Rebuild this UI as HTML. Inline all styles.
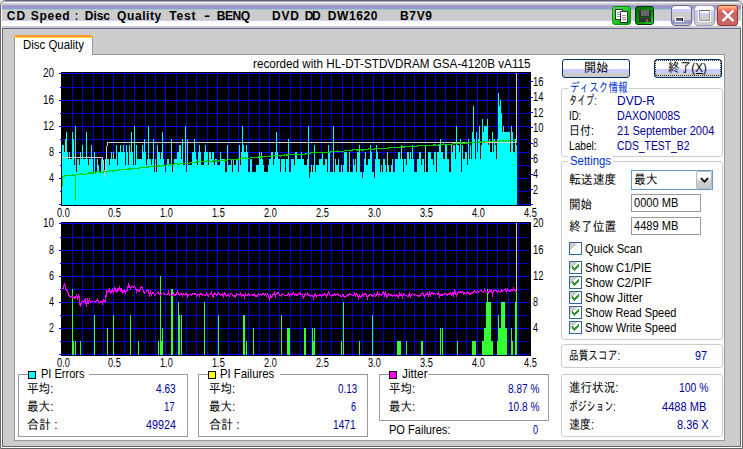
<!DOCTYPE html><html lang="ja"><head><meta charset="utf-8"><title>CD Speed : Disc Quality Test</title><style>

html,body{margin:0;padding:0}
body{width:743px;height:449px;position:relative;overflow:hidden;background:#e6e6e6;font:12px/14px "Liberation Sans","IPAGothic",sans-serif;color:#000}
div,span,svg{position:absolute;box-sizing:border-box}
.t{white-space:pre;height:14px;line-height:14px;transform-origin:0 50%;display:block}
.b{font-weight:bold}
.frame{left:0;top:0;width:743px;height:449px;border:1px solid #666;border-radius:6px 6px 0 0;background:#fff;overflow:hidden}
.frame3{left:2px;top:28px;width:739px;height:419px;border:1px solid #666;border-top-color:#666699;background:#ccc}
.titlebar{left:1px;top:0;width:739px;height:28px;border-radius:4px 4px 0 0;overflow:hidden}
.band{left:0;width:739px}
.page{left:14px;top:54px;width:711px;height:387px;border:1px solid #999;background:#fff}
.tab{left:14px;top:37px;width:79px;height:18px;background:#fff;border:1px solid #999;border-bottom:0;border-top:0}
.gb{border:1px solid #ccc;border-radius:3px}
.gbl{background:#fff}
.gs{border:1px solid #999}
.btn{border:1px solid #003366;border-radius:3px;background:linear-gradient(#fff 0,#fff 53%,#ccccff 53%,#ccccff 76.5%,#ccc 76.5%,#ccc 100%)}
.edit{border:1px solid #999;background:#fff}
.cb{width:13px;height:13px;border:1px solid #336699;background:linear-gradient(135deg,#ccc 0,#ccc 34%,#ffffcc 36%,#fff 40%)}
.lg{width:8px;height:8px;border:1px solid #000}

</style></head><body>
<div class="frame"><div class="titlebar">
<div class="band" style="top:0px;height:1px;background:#9999cc"></div>
<div class="band" style="top:1px;height:1px;background:#fff"></div>
<div class="band" style="top:2px;height:2px;background:#ccc"></div>
<div class="band" style="top:4px;height:4px;background:#9999cc"></div>
<div class="band" style="top:8px;height:1px;background:#99cccc"></div>
<div class="band" style="top:9px;height:10px;background:#ccc"></div>
<div class="band" style="top:19px;height:1px;background:#ccccff"></div>
<div class="band" style="top:20px;height:5px;background:#fff"></div>
<div class="band" style="top:25px;height:2px;background:#ccc"></div>
</div></div><div class="frame3"></div>

<div style="left:612px;top:6px;width:19px;height:19px;border-radius:3px;border:1px solid #009900;background:linear-gradient(135deg,#66cc66 0,#33cc33 40%,#009900 100%)">
<svg style="left:2px;top:2px" width="14" height="14" viewBox="0 0 14 14" shape-rendering="crispEdges"><rect x="0.5" y="0.5" width="7" height="10" fill="#fff" stroke="#333"/><rect x="5.5" y="2.5" width="7" height="11" fill="#fff" stroke="#333"/><path d="M2 3h4M2 5h3M2 7h3M7 6h4M7 8h4M7 10h4" stroke="#999" fill="none"/><rect x="10" y="10" width="1" height="1" fill="#cc0066"/></svg></div>
<div style="left:635px;top:6px;width:19px;height:19px;border-radius:3px;border:1px solid #003300;background:linear-gradient(135deg,#006600 0,#009900 60%,#33cc33 100%)">
<svg style="left:2px;top:2px" width="14" height="14" viewBox="0 0 14 14" shape-rendering="crispEdges"><rect x="1" y="1" width="12" height="12" fill="#333"/><rect x="3" y="1" width="8" height="6" fill="#666"/><rect x="3" y="9" width="7" height="4" fill="#333" stroke="#666" stroke-width="0"/><rect x="2" y="8" width="10" height="1" fill="#006600"/><rect x="8" y="10" width="2" height="3" fill="#666"/></svg></div>
<div style="left:671px;top:5px;width:21px;height:21px;border-radius:4px;border:1px solid #666699;background:linear-gradient(#fff 0,#fff 15.8%,#ccccff 15.8%,#ccccff 31.6%,#ccc 31.6%,#ccc 73.7%,#9999cc 73.7%,#9999cc 94.7%,#ccc 94.7%,#ccc 100%)"><div style="left:3px;top:11px;width:9px;height:5px;background:#fff"></div><div style="left:4px;top:12px;width:7px;height:3px;background:#666699;border-right:1px solid #000;border-top:1px solid #333"></div></div>
<div style="left:694px;top:5px;width:21px;height:21px;border-radius:4px;border:1px solid #9999cc;background:linear-gradient(#fff 0,#fff 21%,#ccccff 21%,#ccccff 52%,#ccc 52%,#ccc 100%)"><div style="left:3px;top:3px;width:13px;height:13px;border:1px solid #fff"></div><div style="left:4px;top:4px;width:11px;height:11px;border:1px solid #999;border-top-color:#666;background:linear-gradient(#fff 0,#fff 25%,#ccccff 25%,#ccccff 50%,#ccc 50%,#ccc 100%)"></div></div>
<div style="left:717px;top:5px;width:21px;height:21px;border-radius:3px;border:1px solid #993333;background:linear-gradient(#ffcc99 0,#ff9966 12%,#ff6666 24%,#cc6666 34%,#cc6666 100%)"><svg style="left:2px;top:2px" width="15" height="15" viewBox="0 0 15 15"><path d="M2.6 2.4L13.4 13.2M13.4 2.4L2.6 13.2" stroke="#663333" stroke-width="3.4" fill="none" opacity=".35"/><path d="M2.6 2.4L13.4 13.2M13.4 2.4L2.6 13.2" stroke="#fff" stroke-width="2.5" fill="none"/></svg></div>

<div class="page"></div><div class="tab"></div><div style="left:14px;top:35px;width:79px;height:3px;border-radius:3px 3px 0 0;background:linear-gradient(#ff9933 0,#ff9933 66%,#ffcc33 67%,#ffcc33 100%)"></div>
<svg style="left:0;top:66px" width="560" height="300" viewBox="0 66 560 300" shape-rendering="crispEdges">
<rect x="61" y="72" width="470" height="134" fill="#000"/>
<rect x="72" y="73" width="1" height="133" fill="#0000cc"/><rect x="82" y="73" width="1" height="133" fill="#0000cc"/><rect x="93" y="73" width="1" height="133" fill="#0000cc"/><rect x="103" y="73" width="1" height="133" fill="#0000cc"/><rect x="113" y="73" width="1" height="133" fill="#0000ff"/><rect x="124" y="73" width="1" height="133" fill="#0000cc"/><rect x="134" y="73" width="1" height="133" fill="#0000cc"/><rect x="145" y="73" width="1" height="133" fill="#0000cc"/><rect x="155" y="73" width="1" height="133" fill="#0000cc"/><rect x="165" y="73" width="1" height="133" fill="#0000ff"/><rect x="176" y="73" width="1" height="133" fill="#0000cc"/><rect x="186" y="73" width="1" height="133" fill="#0000cc"/><rect x="196" y="73" width="1" height="133" fill="#0000cc"/><rect x="207" y="73" width="1" height="133" fill="#0000cc"/><rect x="217" y="73" width="1" height="133" fill="#0000ff"/><rect x="228" y="73" width="1" height="133" fill="#0000cc"/><rect x="238" y="73" width="1" height="133" fill="#0000cc"/><rect x="248" y="73" width="1" height="133" fill="#0000cc"/><rect x="259" y="73" width="1" height="133" fill="#0000cc"/><rect x="269" y="73" width="1" height="133" fill="#0000ff"/><rect x="279" y="73" width="1" height="133" fill="#0000cc"/><rect x="290" y="73" width="1" height="133" fill="#0000cc"/><rect x="300" y="73" width="1" height="133" fill="#0000cc"/><rect x="311" y="73" width="1" height="133" fill="#0000cc"/><rect x="321" y="73" width="1" height="133" fill="#0000ff"/><rect x="331" y="73" width="1" height="133" fill="#0000cc"/><rect x="342" y="73" width="1" height="133" fill="#0000cc"/><rect x="352" y="73" width="1" height="133" fill="#0000cc"/><rect x="362" y="73" width="1" height="133" fill="#0000cc"/><rect x="373" y="73" width="1" height="133" fill="#0000ff"/><rect x="383" y="73" width="1" height="133" fill="#0000cc"/><rect x="394" y="73" width="1" height="133" fill="#0000cc"/><rect x="404" y="73" width="1" height="133" fill="#0000cc"/><rect x="414" y="73" width="1" height="133" fill="#0000cc"/><rect x="425" y="73" width="1" height="133" fill="#0000ff"/><rect x="435" y="73" width="1" height="133" fill="#0000cc"/><rect x="445" y="73" width="1" height="133" fill="#0000cc"/><rect x="456" y="73" width="1" height="133" fill="#0000cc"/><rect x="466" y="73" width="1" height="133" fill="#0000cc"/><rect x="477" y="73" width="1" height="133" fill="#0000ff"/><rect x="487" y="73" width="1" height="133" fill="#0000cc"/><rect x="497" y="73" width="1" height="133" fill="#0000cc"/><rect x="508" y="73" width="1" height="133" fill="#0000cc"/><rect x="518" y="73" width="1" height="133" fill="#0000cc"/><rect x="59" y="73" width="470" height="1" fill="#0000ff"/><rect x="60" y="87" width="469" height="1" fill="#0000cc"/><rect x="59" y="100" width="470" height="1" fill="#0000ff"/><rect x="60" y="113" width="469" height="1" fill="#0000cc"/><rect x="59" y="126" width="470" height="1" fill="#0000ff"/><rect x="60" y="139" width="469" height="1" fill="#0000cc"/><rect x="59" y="152" width="470" height="1" fill="#0000ff"/><rect x="60" y="165" width="469" height="1" fill="#0000cc"/><rect x="59" y="178" width="470" height="1" fill="#0000ff"/><rect x="60" y="191" width="469" height="1" fill="#0000cc"/><rect x="59" y="204" width="470" height="1" fill="#0000ff"/>
<path d="M62 205V145H64V152H65V139H66V132H67V152H68V159H69V152H70V159H72V132H73V139H74V165H75V126H76V172H77V159H79V165H80V152H81V159H82V145H83V159H86V132H87V159H88V165H89V159H91V145H92V159H93V172H94V152H95V172H97V159H98V165H99V172H101V159H103V165H104V172H106V159H109V165H110V159H111V152H112V159H113V152H114V159H116V145H117V165H118V152H120V145H121V152H123V145H124V152H125V165H126V145H127V152H128V165H129V145H130V152H131V132H132V152H133V165H134V126H135V165H136V145H137V159H142V145H143V152H144V139H145V152H146V165H147V159H148V126H149V159H151V165H152V159H153V139H154V172H155V159H156V172H157V145H158V152H160V159H161V152H162V132H163V159H164V165H165V172H166V165H167V159H169V165H171V139H172V172H173V165H174V159H177V152H179V145H181V159H182V139H183V165H185V126H186V172H187V139H188V165H192V152H194V139H195V152H196V159H197V165H198V152H199V145H200V152H201V165H204V152H205V145H206V152H208V165H209V152H211V159H212V152H214V165H215V159H217V165H220V152H221V159H225V172H227V145H228V165H231V159H232V172H233V159H234V165H236V159H238V172H239V145H240V165H241V152H242V126H243V145H244V152H246V145H247V152H248V172H250V159H252V172H256V165H259V152H260V159H261V152H262V159H263V165H264V172H268V165H269V159H271V152H273V165H274V159H275V152H276V132H277V152H278V159H280V172H281V159H285V172H286V159H288V139H289V172H291V159H294V165H295V152H297V159H301V152H302V159H304V165H307V159H308V126H309V178H310V172H311V165H312V172H313V165H314V145H315V172H316V165H319V159H322V152H323V165H325V159H327V172H328V145H329V152H330V172H333V126H334V172H335V159H336V165H338V159H339V172H341V165H342V172H343V165H344V152H347V172H349V152H350V172H353V159H354V165H355V159H356V172H357V152H359V145H360V172H362V178H363V172H364V159H365V152H366V165H368V159H370V145H371V152H372V172H374V178H375V159H376V145H377V152H378V159H380V172H381V165H382V172H383V159H385V165H386V172H387V152H388V165H389V172H391V165H392V159H393V172H395V159H398V152H400V159H401V145H402V159H403V172H404V159H406V165H407V152H409V159H410V152H411V159H412V145H413V159H414V172H417V159H419V152H421V165H422V159H424V172H425V145H426V172H428V152H431V159H433V165H434V152H436V172H437V152H439V145H440V139H441V152H443V159H445V145H447V159H449V172H451V145H452V152H453V145H455V159H456V126H457V145H459V152H460V139H461V172H462V145H463V159H465V152H467V165H468V139H469V159H470V145H471V159H472V132H473V106H474V139H475V159H476V132H477V152H478V139H479V126H480V159H481V145H482V119H483V132H484V126H487V119H488V145H489V139H490V152H492V132H493V152H494V139H495V145H496V159H497V139H498V93H499V106H500V100H501V113H502V132H503V126H504V132H510V152H511V126H512V132H513V152H515V139H516V145H517V205Z" fill="#00ffff"/>
<rect x="529" y="197" width="2" height="1" fill="#0000ff"/>
<rect x="529" y="189" width="4" height="1" fill="#0000ff"/>
<rect x="529" y="181" width="2" height="1" fill="#0000ff"/>
<rect x="529" y="174" width="4" height="1" fill="#0000ff"/>
<rect x="529" y="166" width="2" height="1" fill="#0000ff"/>
<rect x="529" y="158" width="4" height="1" fill="#0000ff"/>
<rect x="529" y="150" width="2" height="1" fill="#0000ff"/>
<rect x="529" y="143" width="4" height="1" fill="#0000ff"/>
<rect x="529" y="135" width="2" height="1" fill="#0000ff"/>
<rect x="529" y="127" width="4" height="1" fill="#0000ff"/>
<rect x="529" y="120" width="2" height="1" fill="#0000ff"/>
<rect x="529" y="112" width="4" height="1" fill="#0000ff"/>
<rect x="529" y="104" width="2" height="1" fill="#0000ff"/>
<rect x="529" y="97" width="4" height="1" fill="#0000ff"/>
<rect x="529" y="89" width="2" height="1" fill="#0000ff"/>
<rect x="529" y="81" width="4" height="1" fill="#0000ff"/>
<rect x="517" y="204" width="16" height="1" fill="#0000ff"/>
<rect x="516" y="73" width="1" height="70" fill="#ccc"/>
<polyline points="62,157.5 102.5,157.5 103.5,162 104.5,176.5 105.5,168 106.5,150 107.5,142.5 516,142.5" fill="none" stroke="#ccc" stroke-width="1"/>
<polyline points="62.5,186 62.5,177 63,176.6 65,175.9 67,175.6 69,175.9 71,175.6 73,174.8 75,175.6 77,174.3 79,174.6 81,173.8 83,174.1 85,174.4 87,173.6 89,172.9 91,173.1 93,172.9 95,173.2 97,171.9 99,171.7 101,172.5 103,172.2 105,171.5 107,171.3 109,171.1 111,170.3 113,171.1 115,170.4 117,170.2 119,170.0 121,169.3 123,169.5 125,169.3 127,169.1 129,168.9 131,169.2 133,168.0 135,168.8 137,168.6 139,168.4 141,167.2 143,168.0 145,167.3 147,167.1 149,166.9 151,166.7 153,166.5 155,166.8 157,166.1 159,165.9 161,166.2 163,165.5 165,165.8 167,164.6 169,165.5 171,164.3 173,164.6 175,163.9 177,163.7 179,164.5 181,163.3 183,163.7 185,163.5 187,163.3 189,163.1 191,162.4 193,162.8 195,162.6 197,161.9 199,161.7 201,161.6 203,161.9 205,161.7 207,161.0 209,161.4 211,161.2 213,161.0 215,160.8 217,161.2 219,161.0 221,160.3 223,160.2 225,160.0 227,160.3 229,159.7 231,159.5 233,159.3 235,159.7 237,159.5 239,158.8 241,158.7 243,158.0 245,157.9 247,158.2 249,158.5 251,157.4 253,157.7 255,157.1 257,157.4 259,156.7 261,157.1 263,156.9 265,156.8 267,156.6 269,156.5 271,156.3 273,155.7 275,155.5 277,155.8 279,155.7 281,156.0 283,155.4 285,154.7 287,155.1 289,154.9 291,154.8 293,154.6 295,154.5 297,154.3 299,154.2 301,154.5 303,154.4 305,154.3 307,153.1 309,154.0 311,152.8 313,152.7 315,153.0 317,152.4 319,152.2 321,152.6 323,153.0 325,152.3 327,152.2 329,152.5 331,151.9 333,151.2 335,151.6 337,151.0 339,151.3 341,151.2 343,151.5 345,150.4 347,150.8 349,150.6 351,151.0 353,149.9 355,149.7 357,150.1 359,149.9 361,149.8 363,150.2 365,149.5 367,149.4 369,148.8 371,149.1 373,149.5 375,148.9 377,148.2 379,148.6 381,148.5 383,148.3 385,148.2 387,148.6 389,147.9 391,147.3 393,147.2 395,147.5 397,147.4 399,147.3 401,147.2 403,147.0 405,146.9 407,146.3 409,146.6 411,146.5 413,146.9 415,146.3 417,146.1 419,145.5 421,145.9 423,145.7 425,145.1 427,145.5 429,145.4 431,145.2 433,145.1 435,145.0 437,145.4 439,144.7 441,144.6 443,144.0 445,144.4 447,144.2 449,144.1 451,144.5 453,143.9 455,143.8 457,143.6 459,143.5 461,142.9 463,143.8 465,143.1 467,143.0 469,142.9 471,142.8 473,142.2 475,142.5 477,142.4 479,141.8 481,142.2 483,142.1 485,141.9 487,141.8 489,141.2 491,141.6 493,141.0 495,141.4 497,141.7 499,141.1 501,140.5 503,140.9 505,141.3 507,140.6 509,141.0 511,140.4 513,140.8 515,139.7" fill="none" stroke="#00cc00" stroke-width="1.2"/>
<rect x="75" y="176" width="1" height="25" fill="#00cc00"/>
<rect x="61" y="222" width="470" height="134" fill="#000"/>
<rect x="72" y="223" width="1" height="133" fill="#0000cc"/><rect x="82" y="223" width="1" height="133" fill="#0000cc"/><rect x="93" y="223" width="1" height="133" fill="#0000cc"/><rect x="103" y="223" width="1" height="133" fill="#0000cc"/><rect x="113" y="223" width="1" height="133" fill="#0000ff"/><rect x="124" y="223" width="1" height="133" fill="#0000cc"/><rect x="134" y="223" width="1" height="133" fill="#0000cc"/><rect x="145" y="223" width="1" height="133" fill="#0000cc"/><rect x="155" y="223" width="1" height="133" fill="#0000cc"/><rect x="165" y="223" width="1" height="133" fill="#0000ff"/><rect x="176" y="223" width="1" height="133" fill="#0000cc"/><rect x="186" y="223" width="1" height="133" fill="#0000cc"/><rect x="196" y="223" width="1" height="133" fill="#0000cc"/><rect x="207" y="223" width="1" height="133" fill="#0000cc"/><rect x="217" y="223" width="1" height="133" fill="#0000ff"/><rect x="228" y="223" width="1" height="133" fill="#0000cc"/><rect x="238" y="223" width="1" height="133" fill="#0000cc"/><rect x="248" y="223" width="1" height="133" fill="#0000cc"/><rect x="259" y="223" width="1" height="133" fill="#0000cc"/><rect x="269" y="223" width="1" height="133" fill="#0000ff"/><rect x="279" y="223" width="1" height="133" fill="#0000cc"/><rect x="290" y="223" width="1" height="133" fill="#0000cc"/><rect x="300" y="223" width="1" height="133" fill="#0000cc"/><rect x="311" y="223" width="1" height="133" fill="#0000cc"/><rect x="321" y="223" width="1" height="133" fill="#0000ff"/><rect x="331" y="223" width="1" height="133" fill="#0000cc"/><rect x="342" y="223" width="1" height="133" fill="#0000cc"/><rect x="352" y="223" width="1" height="133" fill="#0000cc"/><rect x="362" y="223" width="1" height="133" fill="#0000cc"/><rect x="373" y="223" width="1" height="133" fill="#0000ff"/><rect x="383" y="223" width="1" height="133" fill="#0000cc"/><rect x="394" y="223" width="1" height="133" fill="#0000cc"/><rect x="404" y="223" width="1" height="133" fill="#0000cc"/><rect x="414" y="223" width="1" height="133" fill="#0000cc"/><rect x="425" y="223" width="1" height="133" fill="#0000ff"/><rect x="435" y="223" width="1" height="133" fill="#0000cc"/><rect x="445" y="223" width="1" height="133" fill="#0000cc"/><rect x="456" y="223" width="1" height="133" fill="#0000cc"/><rect x="466" y="223" width="1" height="133" fill="#0000cc"/><rect x="477" y="223" width="1" height="133" fill="#0000ff"/><rect x="487" y="223" width="1" height="133" fill="#0000cc"/><rect x="497" y="223" width="1" height="133" fill="#0000cc"/><rect x="508" y="223" width="1" height="133" fill="#0000cc"/><rect x="518" y="223" width="1" height="133" fill="#0000cc"/><rect x="59" y="223" width="470" height="1" fill="#0000ff"/><rect x="60" y="237" width="469" height="1" fill="#0000cc"/><rect x="59" y="250" width="470" height="1" fill="#0000ff"/><rect x="60" y="263" width="469" height="1" fill="#0000cc"/><rect x="59" y="276" width="470" height="1" fill="#0000ff"/><rect x="60" y="289" width="469" height="1" fill="#0000cc"/><rect x="59" y="302" width="470" height="1" fill="#0000ff"/><rect x="60" y="315" width="469" height="1" fill="#0000cc"/><rect x="59" y="328" width="470" height="1" fill="#0000ff"/><rect x="60" y="341" width="469" height="1" fill="#0000cc"/><rect x="59" y="354" width="470" height="1" fill="#0000ff"/>
<g fill="#33ff33"><rect x="72" y="289" width="1" height="66"/><rect x="73" y="341" width="1" height="14"/><rect x="75" y="341" width="1" height="14"/><rect x="80" y="341" width="1" height="14"/><rect x="94" y="315" width="1" height="40"/><rect x="107" y="328" width="1" height="27"/><rect x="113" y="315" width="1" height="40"/><rect x="130" y="315" width="1" height="40"/><rect x="138" y="341" width="1" height="14"/><rect x="158" y="341" width="1" height="14"/><rect x="160" y="276" width="1" height="79"/><rect x="161" y="341" width="2" height="14"/><rect x="162" y="328" width="1" height="27"/><rect x="171" y="289" width="2" height="66"/><rect x="178" y="302" width="1" height="53"/><rect x="179" y="315" width="1" height="40"/><rect x="181" y="315" width="1" height="40"/><rect x="204" y="302" width="1" height="53"/><rect x="218" y="315" width="1" height="40"/><rect x="243" y="315" width="2" height="40"/><rect x="246" y="341" width="1" height="14"/><rect x="253" y="328" width="1" height="27"/><rect x="281" y="315" width="1" height="40"/><rect x="287" y="328" width="3" height="27"/><rect x="304" y="328" width="2" height="27"/><rect x="312" y="328" width="1" height="27"/><rect x="313" y="341" width="1" height="14"/><rect x="314" y="328" width="1" height="27"/><rect x="341" y="341" width="1" height="14"/><rect x="343" y="302" width="1" height="53"/><rect x="359" y="341" width="1" height="14"/><rect x="372" y="315" width="1" height="40"/><rect x="397" y="341" width="4" height="14"/><rect x="406" y="341" width="1" height="14"/><rect x="421" y="341" width="2" height="14"/><rect x="440" y="328" width="1" height="27"/><rect x="442" y="328" width="1" height="27"/><rect x="457" y="341" width="1" height="14"/><rect x="472" y="341" width="4" height="14"/><rect x="482" y="341" width="3" height="14"/><rect x="484" y="328" width="2" height="27"/><rect x="486" y="302" width="5" height="53"/><rect x="487" y="289" width="1" height="66"/><rect x="491" y="341" width="2" height="14"/><rect x="497" y="341" width="3" height="14"/><rect x="498" y="315" width="1" height="40"/><rect x="499" y="328" width="2" height="27"/><rect x="501" y="302" width="4" height="53"/><rect x="505" y="328" width="2" height="27"/><rect x="511" y="328" width="1" height="27"/><rect x="512" y="341" width="1" height="14"/><rect x="515" y="302" width="2" height="53"/><rect x="516" y="289" width="1" height="66"/></g>
<rect x="516" y="223" width="1" height="68" fill="#ccc"/>
<polyline points="62.5,288.0 63.5,288.1 64.5,282.9 65.5,288.4 66.5,290.0 67.5,290.2 68.5,295.0 69.5,295.9 70.5,297.1 71.5,296.5 72.5,297.2 73.5,297.5 74.5,297.9 75.5,298.1 76.5,294.1 77.5,298.1 78.5,294.6 79.5,299.5 80.5,307.3 81.5,301.5 82.5,300.8 83.5,301.9 84.5,300.7 85.5,298.9 86.5,306.5 87.5,299.7 88.5,302.0 89.5,299.5 90.5,302.5 91.5,301.5 92.5,301.7 93.5,301.3 94.5,301.4 95.5,302.1 96.5,300.8 97.5,299.5 98.5,301.5 99.5,302.9 100.5,301.8 101.5,301.6 102.5,303.4 103.5,300.0 104.5,300.9 105.5,301.6 106.5,290.9 107.5,291.9 108.5,291.2 109.5,289.6 110.5,292.8 111.5,292.1 112.5,289.8 113.5,292.3 114.5,288.1 115.5,289.5 116.5,293.3 117.5,289.0 118.5,290.1 119.5,286.4 120.5,291.6 121.5,288.4 122.5,293.8 123.5,290.7 124.5,289.5 125.5,292.6 126.5,290.7 127.5,290.5 128.5,284.1 129.5,285.9 130.5,288.9 131.5,286.5 132.5,286.5 133.5,287.2 134.5,286.2 135.5,287.8 136.5,291.7 137.5,290.2 138.5,291.2 139.5,291.1 140.5,288.4 141.5,287.1 142.5,288.5 143.5,291.5 144.5,293.2 145.5,292.4 146.5,291.7 147.5,289.8 148.5,291.2 149.5,295.1 150.5,291.7 151.5,294.5 152.5,292.8 153.5,292.8 154.5,295.1 155.5,294.5 156.5,293.6 157.5,292.6 158.5,291.7 159.5,294.6 160.5,295.4 161.5,294.2 162.5,293.5 163.5,292.7 164.5,294.0 165.5,294.2 166.5,294.3 167.5,294.8 168.5,291.9 169.5,295.0 170.5,294.6 171.5,295.4 172.5,295.1 173.5,293.5 174.5,295.2 175.5,295.4 176.5,293.7 177.5,291.7 178.5,293.6 179.5,294.8 180.5,293.6 181.5,293.6 182.5,295.8 183.5,294.2 184.5,294.8 185.5,294.3 186.5,293.1 187.5,296.4 188.5,294.3 189.5,294.6 190.5,294.8 191.5,294.9 192.5,293.4 193.5,293.4 194.5,294.3 195.5,293.9 196.5,295.9 197.5,294.7 198.5,294.5 199.5,295.7 200.5,293.2 201.5,293.4 202.5,295.0 203.5,294.4 204.5,295.5 205.5,295.6 206.5,293.6 207.5,295.7 208.5,295.9 209.5,294.2 210.5,294.3 211.5,292.6 212.5,295.3 213.5,297.1 214.5,292.7 215.5,294.2 216.5,295.4 217.5,293.9 218.5,292.9 219.5,293.5 220.5,294.9 221.5,294.4 222.5,293.7 223.5,296.5 224.5,292.9 225.5,294.6 226.5,296.0 227.5,294.3 228.5,295.0 229.5,296.2 230.5,293.9 231.5,293.7 232.5,294.4 233.5,295.9 234.5,295.4 235.5,297.0 236.5,294.1 237.5,294.5 238.5,294.6 239.5,294.7 240.5,293.2 241.5,296.1 242.5,294.7 243.5,294.5 244.5,297.4 245.5,294.2 246.5,295.7 247.5,295.8 248.5,293.9 249.5,295.1 250.5,295.5 251.5,294.4 252.5,295.2 253.5,295.7 254.5,294.0 255.5,296.2 256.5,295.9 257.5,295.9 258.5,293.7 259.5,294.7 260.5,294.3 261.5,294.9 262.5,294.1 263.5,293.9 264.5,295.5 265.5,294.3 266.5,295.8 267.5,294.4 268.5,295.8 269.5,299.1 270.5,295.2 271.5,296.9 272.5,295.6 273.5,294.0 274.5,292.2 275.5,296.1 276.5,294.0 277.5,292.8 278.5,293.1 279.5,295.0 280.5,295.2 281.5,295.9 282.5,293.8 283.5,294.7 284.5,295.4 285.5,295.8 286.5,295.6 287.5,294.9 288.5,293.2 289.5,295.6 290.5,293.9 291.5,294.9 292.5,294.5 293.5,293.0 294.5,295.1 295.5,294.0 296.5,295.0 297.5,295.2 298.5,294.5 299.5,293.0 300.5,294.1 301.5,294.4 302.5,295.1 303.5,297.7 304.5,295.7 305.5,294.1 306.5,294.5 307.5,293.3 308.5,295.1 309.5,294.8 310.5,296.3 311.5,295.3 312.5,295.5 313.5,297.9 314.5,294.4 315.5,293.9 316.5,296.8 317.5,295.2 318.5,295.4 319.5,295.1 320.5,295.1 321.5,296.3 322.5,294.8 323.5,295.5 324.5,293.9 325.5,294.7 326.5,296.8 327.5,295.1 328.5,292.0 329.5,294.0 330.5,295.8 331.5,296.2 332.5,294.8 333.5,294.9 334.5,293.6 335.5,294.9 336.5,294.3 337.5,293.9 338.5,295.1 339.5,295.5 340.5,296.2 341.5,296.7 342.5,295.1 343.5,294.8 344.5,297.4 345.5,296.2 346.5,296.0 347.5,295.0 348.5,294.9 349.5,293.8 350.5,294.7 351.5,294.8 352.5,295.2 353.5,295.5 354.5,293.5 355.5,295.7 356.5,294.1 357.5,294.5 358.5,297.9 359.5,295.1 360.5,296.9 361.5,296.7 362.5,294.5 363.5,295.8 364.5,293.7 365.5,294.2 366.5,295.1 367.5,298.3 368.5,295.5 369.5,295.2 370.5,294.7 371.5,294.7 372.5,296.6 373.5,296.0 374.5,294.2 375.5,296.0 376.5,295.0 377.5,292.9 378.5,295.7 379.5,293.6 380.5,294.3 381.5,295.5 382.5,293.1 383.5,292.2 384.5,295.0 385.5,292.5 386.5,297.0 387.5,296.4 388.5,293.8 389.5,294.5 390.5,295.1 391.5,294.6 392.5,295.9 393.5,295.5 394.5,294.9 395.5,295.7 396.5,294.7 397.5,295.5 398.5,297.4 399.5,293.7 400.5,295.4 401.5,294.1 402.5,297.3 403.5,294.1 404.5,294.3 405.5,295.8 406.5,295.5 407.5,296.4 408.5,295.8 409.5,293.8 410.5,296.4 411.5,294.4 412.5,293.6 413.5,294.6 414.5,295.2 415.5,294.6 416.5,295.4 417.5,295.2 418.5,296.4 419.5,295.8 420.5,294.5 421.5,294.2 422.5,292.9 423.5,294.6 424.5,296.4 425.5,294.4 426.5,294.3 427.5,292.8 428.5,295.3 429.5,292.9 430.5,295.6 431.5,292.3 432.5,292.5 433.5,293.9 434.5,293.6 435.5,294.4 436.5,293.5 437.5,294.5 438.5,292.3 439.5,296.8 440.5,295.0 441.5,294.9 442.5,294.9 443.5,294.2 444.5,294.2 445.5,293.7 446.5,293.7 447.5,295.3 448.5,293.8 449.5,294.3 450.5,292.8 451.5,294.7 452.5,293.1 453.5,295.6 454.5,290.4 455.5,292.3 456.5,295.8 457.5,293.9 458.5,291.7 459.5,292.7 460.5,292.0 461.5,292.2 462.5,291.4 463.5,294.3 464.5,293.1 465.5,293.3 466.5,293.6 467.5,291.6 468.5,292.4 469.5,294.0 470.5,294.6 471.5,292.4 472.5,293.1 473.5,292.7 474.5,290.9 475.5,292.3 476.5,292.7 477.5,291.2 478.5,292.3 479.5,291.6 480.5,290.4 481.5,291.3 482.5,291.2 483.5,292.4 484.5,289.7 485.5,291.7 486.5,292.2 487.5,291.9 488.5,292.8 489.5,289.6 490.5,290.8 491.5,290.2 492.5,294.5 493.5,291.2 494.5,290.2 495.5,290.2 496.5,290.5 497.5,291.8 498.5,290.8 499.5,291.5 500.5,292.1 501.5,290.2 502.5,290.9 503.5,290.2 504.5,289.8 505.5,289.0 506.5,291.4 507.5,289.2 508.5,290.8 509.5,291.0 510.5,291.5 511.5,289.9 512.5,290.6 513.5,288.3 514.5,290.2 515.5,290.4 516.5,292.3" fill="none" stroke="#ff00ff" stroke-width="1.25"/>
</svg>

<div class="btn" style="left:562px;top:59px;width:68px;height:19px"></div>
<div class="btn" style="left:654px;top:59px;width:68px;height:19px"><div style="left:0;top:0;width:66px;height:16px;border:1px dotted #333"></div><div style="left:41px;top:13px;width:7px;height:1px;background:#000"></div></div>
<div class="gb" style="left:561px;top:88px;width:162px;height:69px"></div><div class="gbl" style="left:568px;top:82px;width:61px;height:12px"></div>
<div class="gb" style="left:561px;top:161px;width:162px;height:179px"></div><div class="gbl" style="left:568px;top:155px;width:45px;height:12px"></div>
<div class="gb" style="left:561px;top:344px;width:162px;height:24px"></div>
<div class="gb" style="left:561px;top:374px;width:162px;height:63px"></div>
<div class="edit" style="left:631px;top:170px;width:82px;height:20px;border-color:#6699cc"><div style="left:64px;top:0;width:16px;height:18px;border:1px solid #bbb;border-radius:2px;background:linear-gradient(#fff 0,#fff 35%,#ccc 60%,#ccc 100%)"><svg style="left:3px;top:5px" width="9" height="7" viewBox="0 0 9 7"><path d="M1 1.2L4.5 4.8L8 1.2" stroke="#000" stroke-width="1.8" fill="none"/></svg></div></div>
<div class="edit" style="left:631px;top:194px;width:70px;height:18px"></div>
<div class="edit" style="left:631px;top:217px;width:70px;height:18px"></div>
<div class="cb" style="left:569px;top:242px"></div><div class="cb" style="left:569px;top:261px"><svg style="left:0;top:0" width="11" height="11" viewBox="1 1 11 11" shape-rendering="crispEdges"><path d="M3 5h1v1h1v1h1v-1h1v-1h1v-1h1v-1h1v3h-1v1h-1v1h-1v1h-1v1h-1v-1h-1v-1h-1z" fill="#339933"/></svg></div><div class="cb" style="left:569px;top:276px"><svg style="left:0;top:0" width="11" height="11" viewBox="1 1 11 11" shape-rendering="crispEdges"><path d="M3 5h1v1h1v1h1v-1h1v-1h1v-1h1v-1h1v3h-1v1h-1v1h-1v1h-1v1h-1v-1h-1v-1h-1z" fill="#339933"/></svg></div><div class="cb" style="left:569px;top:291px"><svg style="left:0;top:0" width="11" height="11" viewBox="1 1 11 11" shape-rendering="crispEdges"><path d="M3 5h1v1h1v1h1v-1h1v-1h1v-1h1v-1h1v3h-1v1h-1v1h-1v1h-1v1h-1v-1h-1v-1h-1z" fill="#339933"/></svg></div><div class="cb" style="left:569px;top:306px"><svg style="left:0;top:0" width="11" height="11" viewBox="1 1 11 11" shape-rendering="crispEdges"><path d="M3 5h1v1h1v1h1v-1h1v-1h1v-1h1v-1h1v3h-1v1h-1v1h-1v1h-1v1h-1v-1h-1v-1h-1z" fill="#339933"/></svg></div><div class="cb" style="left:569px;top:321px"><svg style="left:0;top:0" width="11" height="11" viewBox="1 1 11 11" shape-rendering="crispEdges"><path d="M3 5h1v1h1v1h1v-1h1v-1h1v-1h1v-1h1v3h-1v1h-1v1h-1v1h-1v1h-1v-1h-1v-1h-1z" fill="#339933"/></svg></div>
<div class="gs" style="left:18px;top:374px;width:170px;height:63px"></div><div class="gbl" style="left:28px;top:368px;width:61px;height:12px"></div><div class="lg" style="left:28px;top:371px;background:#00ffff"></div>
<div class="gs" style="left:198px;top:374px;width:170px;height:63px"></div><div class="gbl" style="left:208px;top:368px;width:72px;height:12px"></div><div class="lg" style="left:208px;top:371px;background:#ffff00"></div>
<div class="gs" style="left:379px;top:374px;width:170px;height:47px"></div><div class="gbl" style="left:389px;top:368px;width:39px;height:12px"></div><div class="lg" style="left:389px;top:371px;background:#ff00ff"></div>

<span id="t0" class="t b" style="left:6.7px;top:8.5px;letter-spacing:1.16px">CD</span>
<span id="t1" class="t b" style="left:30.7px;top:8.5px;letter-spacing:0.75px">Speed</span>
<span id="t2" class="t b" style="left:74.7px;top:8.5px;transform:scaleX(0.750)">:</span>
<span id="t3" class="t b" style="left:84.8px;top:8.5px;letter-spacing:-0.05px">Disc</span>
<span id="t4" class="t b" style="left:117.1px;top:8.5px;letter-spacing:0.57px">Quality</span>
<span id="t5" class="t b" style="left:169.3px;top:8.5px;letter-spacing:0.80px">Test</span>
<span id="t6" class="t b" style="left:203.6px;top:8.5px;transform:scaleX(1.525)">-</span>
<span id="t7" class="t b" style="left:216.7px;top:8.5px;letter-spacing:-0.46px">BENQ</span>
<span id="t8" class="t b" style="left:272.0px;top:8.5px;letter-spacing:0.73px">DVD</span>
<span id="t9" class="t b" style="left:304.8px;top:8.5px;letter-spacing:-1.54px">DD</span>
<span id="t10" class="t b" style="left:327.8px;top:8.5px;letter-spacing:0.60px">DW1620</span>
<span id="t11" class="t b" style="left:400.0px;top:8.5px;letter-spacing:0.66px">B7V9</span>
<span id="t12" class="t" style="left:22.5px;top:37.9px;transform:scaleX(0.953)">Disc Quality</span>
<span id="t13" class="t" style="left:252.5px;top:56.7px;transform:scaleX(0.973)">recorded with HL-DT-STDVDRAM GSA-4120B vA115</span>
<span id="t14" class="t" style="left:43.0px;top:65.9px;transform:scaleX(0.823)">20</span>
<span id="t15" class="t" style="left:43.0px;top:92.9px;transform:scaleX(0.823)">16</span>
<span id="t16" class="t" style="left:43.0px;top:118.9px;transform:scaleX(0.823)">12</span>
<span id="t17" class="t" style="left:49.0px;top:144.9px;transform:scaleX(0.748)">8</span>
<span id="t18" class="t" style="left:49.0px;top:170.9px;transform:scaleX(0.748)">4</span>
<span id="t19" class="t" style="left:533.3px;top:74.8px;transform:scaleX(0.786)">16</span>
<span id="t20" class="t" style="left:533.3px;top:90.2px;transform:scaleX(0.786)">14</span>
<span id="t21" class="t" style="left:533.3px;top:105.6px;transform:scaleX(0.786)">12</span>
<span id="t22" class="t" style="left:533.3px;top:121.0px;transform:scaleX(0.786)">10</span>
<span id="t23" class="t" style="left:533.3px;top:136.4px;transform:scaleX(0.748)">8</span>
<span id="t24" class="t" style="left:533.3px;top:151.8px;transform:scaleX(0.748)">6</span>
<span id="t25" class="t" style="left:533.3px;top:167.2px;transform:scaleX(0.748)">4</span>
<span id="t26" class="t" style="left:533.3px;top:182.6px;transform:scaleX(0.748)">2</span>
<span id="t27" class="t" style="left:43.0px;top:215.7px;transform:scaleX(0.823)">10</span>
<span id="t28" class="t" style="left:49.0px;top:242.9px;transform:scaleX(0.748)">8</span>
<span id="t29" class="t" style="left:49.0px;top:268.9px;transform:scaleX(0.748)">6</span>
<span id="t30" class="t" style="left:49.0px;top:294.9px;transform:scaleX(0.748)">4</span>
<span id="t31" class="t" style="left:49.0px;top:320.9px;transform:scaleX(0.748)">2</span>
<span id="t32" class="t" style="left:533.3px;top:215.5px;transform:scaleX(0.786)">20</span>
<span id="t33" class="t" style="left:533.3px;top:242.7px;transform:scaleX(0.786)">16</span>
<span id="t34" class="t" style="left:533.3px;top:268.7px;transform:scaleX(0.786)">12</span>
<span id="t35" class="t" style="left:533.3px;top:294.7px;transform:scaleX(0.748)">8</span>
<span id="t36" class="t" style="left:533.3px;top:320.7px;transform:scaleX(0.748)">4</span>
<span id="t37" class="t" style="left:57.3px;top:206.1px;transform:scaleX(0.767)">0.0</span>
<span id="t38" class="t" style="left:57.3px;top:355.8px;transform:scaleX(0.767)">0.0</span>
<span id="t39" class="t" style="left:108.0px;top:206.1px;transform:scaleX(0.767)">0.5</span>
<span id="t40" class="t" style="left:108.0px;top:355.8px;transform:scaleX(0.767)">0.5</span>
<span id="t41" class="t" style="left:160.0px;top:206.1px;transform:scaleX(0.767)">1.0</span>
<span id="t42" class="t" style="left:160.0px;top:355.8px;transform:scaleX(0.767)">1.0</span>
<span id="t43" class="t" style="left:212.0px;top:206.1px;transform:scaleX(0.767)">1.5</span>
<span id="t44" class="t" style="left:212.0px;top:355.8px;transform:scaleX(0.767)">1.5</span>
<span id="t45" class="t" style="left:264.0px;top:206.1px;transform:scaleX(0.767)">2.0</span>
<span id="t46" class="t" style="left:264.0px;top:355.8px;transform:scaleX(0.767)">2.0</span>
<span id="t47" class="t" style="left:316.0px;top:206.1px;transform:scaleX(0.767)">2.5</span>
<span id="t48" class="t" style="left:316.0px;top:355.8px;transform:scaleX(0.767)">2.5</span>
<span id="t49" class="t" style="left:368.0px;top:206.1px;transform:scaleX(0.767)">3.0</span>
<span id="t50" class="t" style="left:368.0px;top:355.8px;transform:scaleX(0.767)">3.0</span>
<span id="t51" class="t" style="left:420.0px;top:206.1px;transform:scaleX(0.767)">3.5</span>
<span id="t52" class="t" style="left:420.0px;top:355.8px;transform:scaleX(0.767)">3.5</span>
<span id="t53" class="t" style="left:472.0px;top:206.1px;transform:scaleX(0.767)">4.0</span>
<span id="t54" class="t" style="left:472.0px;top:355.8px;transform:scaleX(0.767)">4.0</span>
<span id="t55" class="t" style="left:524.0px;top:206.1px;transform:scaleX(0.767)">4.5</span>
<span id="t56" class="t" style="left:524.0px;top:355.8px;transform:scaleX(0.767)">4.5</span>
<span id="t57" class="t" style="left:583.7px;top:60.9px;font-size:13px;transform:scaleX(0.935)">開始</span>
<span id="t58" class="t" style="left:667.7px;top:60.9px;font-size:13px;transform:scaleX(0.897)">終了(X)</span>
<span id="t59" class="t" style="left:569.6px;top:80.5px;color:#0033cc;font-size:13px;transform:scaleX(0.740)">ディスク情報</span>
<span id="t60" class="t" style="left:568.9px;top:94.1px;font-size:13px;transform:scaleX(0.648)">タイプ:</span>
<span id="t61" class="t" style="left:617.0px;top:94.4px;color:#000099">DVD-R</span>
<span id="t62" class="t" style="left:568.9px;top:109.2px;transform:scaleX(0.802)">ID:</span>
<span id="t63" class="t" style="left:617.0px;top:109.2px;color:#000099;transform:scaleX(0.895)">DAXON008S</span>
<span id="t64" class="t" style="left:568.9px;top:123.9px;font-size:13px;transform:scaleX(0.847)">日付:</span>
<span id="t65" class="t" style="left:617.0px;top:124.2px;color:#000099;transform:scaleX(0.923)">21 September 2004</span>
<span id="t66" class="t" style="left:568.9px;top:139.0px;transform:scaleX(0.844)">Label:</span>
<span id="t67" class="t" style="left:617.0px;top:139.0px;color:#000099;transform:scaleX(0.863)">CDS_TEST_B2</span>
<span id="t68" class="t" style="left:569.6px;top:154.0px;color:#0033cc;transform:scaleX(0.946)">Settings</span>
<span id="t69" class="t" style="left:568.6px;top:172.9px;font-size:13px;transform:scaleX(0.912)">転送速度</span>
<span id="t70" class="t" style="left:634.4px;top:173.4px;font-size:13px;transform:scaleX(0.908)">最大</span>
<span id="t71" class="t" style="left:568.6px;top:198.2px;font-size:13px;transform:scaleX(0.892)">開始</span>
<span id="t72" class="t" style="left:634.2px;top:195.7px;transform:scaleX(0.922)">0000 MB</span>
<span id="t73" class="t" style="left:568.6px;top:219.9px;font-size:13px;transform:scaleX(0.912)">終了位置</span>
<span id="t74" class="t" style="left:634.2px;top:218.7px;transform:scaleX(0.922)">4489 MB</span>
<span id="t75" class="t" style="left:585.0px;top:241.8px;transform:scaleX(0.931)">Quick Scan</span>
<span id="t76" class="t" style="left:585.0px;top:260.7px;transform:scaleX(0.933)">Show C1/PIE</span>
<span id="t77" class="t" style="left:585.0px;top:275.6px;transform:scaleX(0.942)">Show C2/PIF</span>
<span id="t78" class="t" style="left:585.0px;top:290.7px;transform:scaleX(0.970)">Show Jitter</span>
<span id="t79" class="t" style="left:585.0px;top:305.5px;transform:scaleX(0.913)">Show Read Speed</span>
<span id="t80" class="t" style="left:585.0px;top:320.5px;transform:scaleX(0.922)">Show Write Speed</span>
<span id="t81" class="t" style="left:568.9px;top:348.7px;font-size:13px;transform:scaleX(0.745)">品質スコア:</span>
<span id="t82" class="t" style="left:694.6px;top:349.0px;color:#000099;transform:scaleX(0.898)">97</span>
<span id="t83" class="t" style="left:568.9px;top:380.7px;font-size:13px;transform:scaleX(0.888)">進行状況:</span>
<span id="t84" class="t" style="left:678.5px;top:381.0px;color:#000099;transform:scaleX(0.867)">100 %</span>
<span id="t85" class="t" style="left:568.9px;top:399.9px;font-size:13px;transform:scaleX(0.682)">ポジション:</span>
<span id="t86" class="t" style="left:661.8px;top:400.2px;color:#000099;transform:scaleX(0.922)">4488 MB</span>
<span id="t87" class="t" style="left:568.9px;top:417.9px;font-size:13px;transform:scaleX(0.847)">速度:</span>
<span id="t88" class="t" style="left:676.7px;top:418.2px;color:#000099;transform:scaleX(0.913)">8.36 X</span>
<span id="t89" class="t" style="left:40.7px;top:367.2px;transform:scaleX(0.919)">PI Errors</span>
<span id="t90" class="t" style="left:26.6px;top:381.7px;font-size:13px;transform:scaleX(0.891)">平均:</span>
<span id="t91" class="t" style="left:155.8px;top:382.0px;color:#000099;transform:scaleX(0.843)">4.63</span>
<span id="t92" class="t" style="left:26.6px;top:399.9px;font-size:13px;transform:scaleX(0.891)">最大:</span>
<span id="t93" class="t" style="left:163.5px;top:400.2px;color:#000099;transform:scaleX(0.801)">17</span>
<span id="t94" class="t" style="left:26.6px;top:417.5px;font-size:13px;transform:scaleX(0.924)">合計 :</span>
<span id="t95" class="t" style="left:145.5px;top:417.8px;color:#000099;transform:scaleX(0.899)">49924</span>
<span id="t96" class="t" style="left:220.3px;top:367.2px;transform:scaleX(0.945)">PI Failures</span>
<span id="t97" class="t" style="left:208.8px;top:381.7px;font-size:13px;transform:scaleX(0.881)">平均:</span>
<span id="t98" class="t" style="left:337.7px;top:382.0px;color:#000099;transform:scaleX(0.822)">0.13</span>
<span id="t99" class="t" style="left:208.8px;top:399.9px;font-size:13px;transform:scaleX(0.881)">最大:</span>
<span id="t100" class="t" style="left:350.7px;top:400.2px;color:#000099;transform:scaleX(0.763)">6</span>
<span id="t101" class="t" style="left:208.8px;top:417.5px;font-size:13px;transform:scaleX(0.924)">合計 :</span>
<span id="t102" class="t" style="left:333.3px;top:417.8px;color:#000099;transform:scaleX(0.843)">1471</span>
<span id="t103" class="t" style="left:402.1px;top:367.2px;transform:scaleX(0.984)">Jitter</span>
<span id="t104" class="t" style="left:388.8px;top:381.7px;font-size:13px;transform:scaleX(0.881)">平均:</span>
<span id="t105" class="t" style="left:507.5px;top:382.0px;color:#000099;transform:scaleX(0.840)">8.87 %</span>
<span id="t106" class="t" style="left:388.8px;top:399.9px;font-size:13px;transform:scaleX(0.881)">最大:</span>
<span id="t107" class="t" style="left:507.5px;top:400.2px;color:#000099;transform:scaleX(0.840)">10.8 %</span>
<span id="t108" class="t" style="left:389.3px;top:422.9px;transform:scaleX(0.921)">PO Failures:</span>
<span id="t109" class="t" style="left:532.5px;top:422.9px;color:#000099;transform:scaleX(0.763)">0</span>
</body></html>
